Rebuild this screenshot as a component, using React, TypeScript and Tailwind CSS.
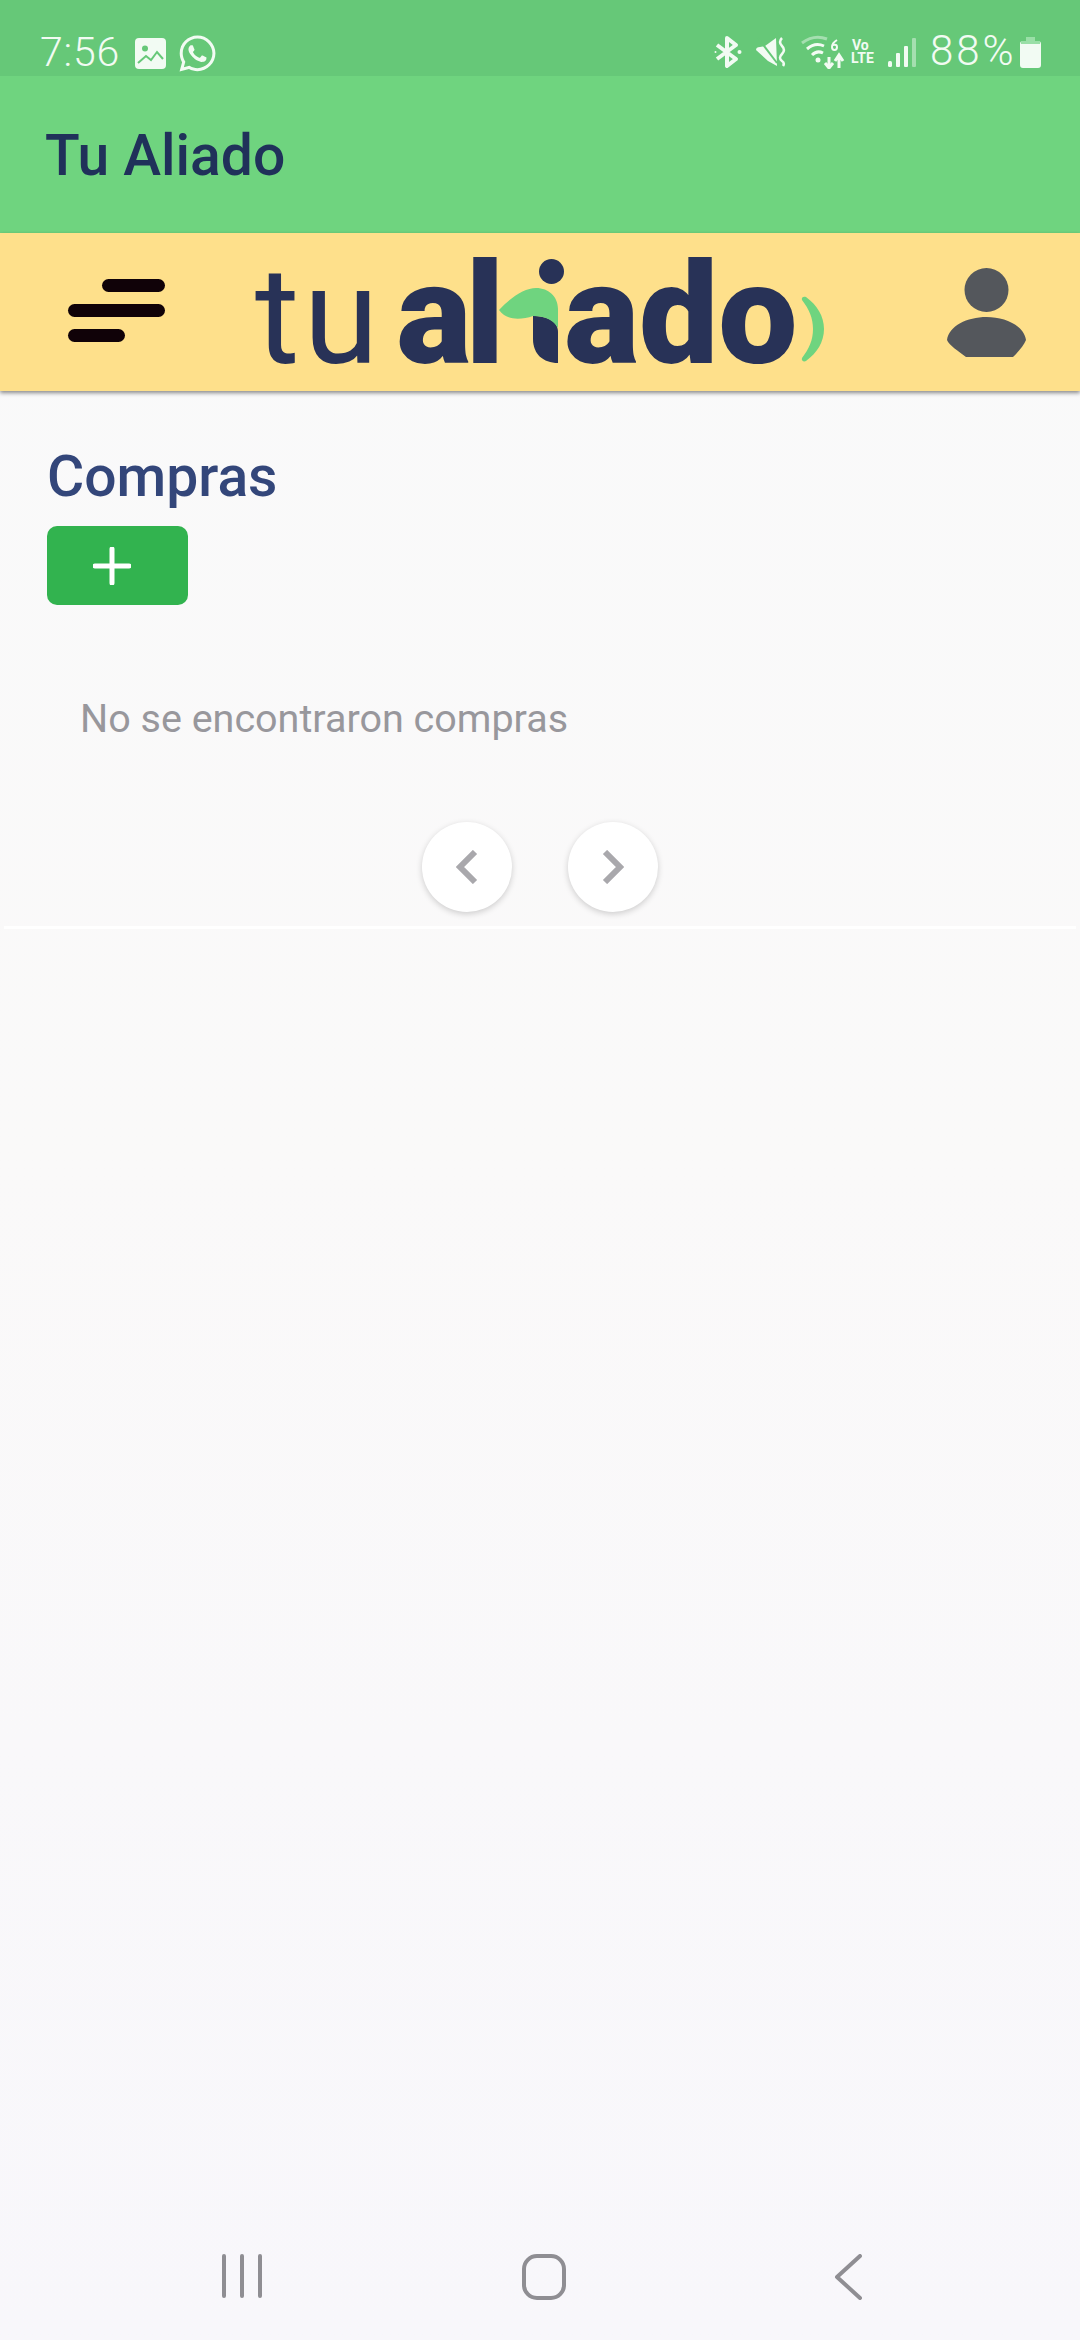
import React from "react";
import { FaWhatsapp } from "react-icons/fa";

const roboto = { fontFamily: "Roboto, sans-serif" };

function StatusLeft() {
  return (
    <div className="flex items-center">
      <span className="text-[41px] leading-none font-light text-[#f2fbf3] tracking-[0.8px] w-[95px] -mt-[2px]">7:56</span>
      <svg width="31" height="31" viewBox="0 0 31 31" className="mr-[11px]">
        <rect width="31" height="31" rx="4" fill="#f2fbf3" />
        <circle cx="10" cy="10.5" r="3" fill="#66c878" />
        <path d="M3 25 L11 18 L16 22 L22 14 L28 21" fill="none" stroke="#66c878" strokeWidth="2" />
      </svg>
      <FaWhatsapp className="w-[41px] h-[41px] text-[#f2fbf3]" />
    </div>
  );
}

function StatusRight() {
  return (
    <div className="flex items-center -mt-[1px]">
      <svg width="28" height="34" viewBox="0 0 28 34" className="mr-[14px]" fill="none" stroke="#f2fbf3" strokeWidth="4" strokeLinejoin="round">
        <path d="M3 10 L22 24 L13 31 L13 3 L22 10 L3 24" />
        <circle cx="1.5" cy="17" r="1" fill="#f2fbf3" stroke="none" />
        <circle cx="25.5" cy="17" r="2" fill="#f2fbf3" stroke="none" />
      </svg>
      <svg width="30" height="30" viewBox="0 0 30 30" className="mr-[15px]" fill="none">
        <path d="M0 13 Q0 10 4 10 L9 9 L20 1 L21 29 L12 24 Z" fill="#f2fbf3" />
        <path d="M2 1 L21 26" stroke="#66c878" strokeWidth="2" />
        <path d="M26 1 Q22 5 26 9 Q30 13 26 17 Q22 21 26 24 Q29 26 27 29" stroke="#f2fbf3" strokeWidth="2.5" />
      </svg>
      <svg width="44" height="34" viewBox="0 0 44 34" className="mr-[6px]" fill="none">
        <path d="M1 8 Q13 -1 26 4" stroke="#f2fbf3" strokeOpacity="0.45" strokeWidth="3" />
        <path d="M6 14 Q14 7 23 11" stroke="#f2fbf3" strokeWidth="3" />
        <path d="M11 20 Q16 15 22 18" stroke="#f2fbf3" strokeWidth="3" />
        <circle cx="17" cy="25" r="2.5" fill="#f2fbf3" />
        <path d="M28 22 L28 32 M24 28 L28 33 L32 28" stroke="#f2fbf3" strokeWidth="3" />
        <path d="M38 33 L38 21 M34 26 L38 20 L42 26" stroke="#f2fbf3" strokeWidth="3" />
        <path d="M36 5 Q31 8 31 12 Q31 15 33.5 15 Q36 15 36 12 Q36 9 32 10" stroke="#f2fbf3" strokeWidth="2" />
      </svg>
      <div className="flex flex-col items-start w-[26px] mr-[11px] text-[#f2fbf3] font-bold" style={roboto}>
        <span className="text-[14px] leading-[13px] pl-[1px]">Vo</span>
        <span className="text-[14px] leading-[13px] tracking-[0.2px]">LTE</span>
      </div>
      <svg width="28" height="29" viewBox="0 0 28 29" className="mr-[14px]" fill="#f2fbf3">
        <rect x="0" y="23" width="4" height="6" rx="1.5" />
        <rect x="8" y="15" width="4" height="14" rx="1" />
        <rect x="16" y="8" width="4" height="21" rx="1" />
        <rect x="24" y="0" width="4" height="29" rx="1" fillOpacity="0.45" />
      </svg>
      <span className="text-[42px] leading-none font-light text-[#f2fbf3] tracking-[3px] w-[90px] -mt-[2px]">88%</span>
      <svg width="21" height="31" viewBox="0 0 21 31">
        <path d="M6 1 L15 1 L15 4 L18 4 Q21 4 21 7 L21 28 Q21 31 18 31 L3 31 Q0 31 0 28 L0 7 Q0 4 3 4 L6 4Z" fill="#f2fbf3" />
        <path d="M6 0 L15 0 L15 4 L20 4 L20 7 L1 7 L1 4 L6 4Z" fill="#9adfa7" />
      </svg>
    </div>
  );
}

function Logo() {
  return (
    <div className="flex items-baseline leading-none text-[#283257] h-[130px] mt-[6px]" style={roboto}>
      <span className="text-[136px] font-normal tracking-[4px] mr-[14px] leading-[130px]">tu</span>
      <span className="text-[141px] font-black tracking-[-6px] leading-[130px]">al</span>
      <svg width="66" height="104" viewBox="0 0 66 104" className="ml-[1px] -mr-[1px] self-end mb-[17px]">
        <ellipse cx="52.5" cy="12.5" rx="12.5" ry="12.5" fill="#283257" />
        <path d="M34 57 C48 57 59 62 59 73 L59 104 C44 104 34 95 34 80Z" fill="#283257" />
        <path d="M0 51 C12 38 26 29 37 29 C50 29 59 38 59 50 L59 69 C55 62 48 57 34 57 C22 61 8 62 0 51Z" fill="#6fd47f" />
      </svg>
      <span className="text-[141px] font-black leading-[130px]">ado</span>
      <svg width="24" height="66" viewBox="0 0 24 66" className="ml-[3px] self-end mb-[18px]">
        <path d="M1 4 C0 1 3 0 5 1 C16 9 23 20 23 33 C23 46 16 57 5 65 C3 66 0 65 1 62 C8 53 12 44 12 33 C12 22 8 13 1 4Z" fill="#6fd47f" />
      </svg>
    </div>
  );
}

function Person() {
  return (
    <svg width="80" height="89" viewBox="0 0 80 89" fill="#54575c">
      <circle cx="39.5" cy="22" r="22" />
      <path d="M0 72 C2 58 20 49 39.5 49 C59 49 77 58 79 72 C77 77 72 83 66 89 L19 89 C11 83 2 77 0 72Z" />
    </svg>
  );
}

export default function App() {
  return (
    <div className="w-[1080px] h-[2340px] flex flex-col bg-linear-to-b from-[#f9f9fa] via-[#faf9f9] to-[#f8f7fb] overflow-hidden" style={roboto}>
      <div className="h-[76px] bg-[#66c878] flex justify-between items-start pt-[33px] pl-[40px] pr-[39px] shrink-0">
        <StatusLeft />
        <StatusRight />
      </div>
      <div className="h-[157px] bg-[#6fd47f] flex items-center pl-[45px] shrink-0">
        <span className="text-[57px] leading-none font-medium text-[#20315a] mt-[2px]">Tu Aliado</span>
      </div>
      <header className="relative z-10 h-[158px] bg-[#fee08b] shadow-[0_2px_4px_rgba(0,0,0,0.45)] flex items-center shrink-0 pl-[68px] pr-[53px]">
        <div className="flex flex-col gap-[12px] w-[97px] mr-[90px] items-end -mt-[3px]">
          <div className="w-[63px] h-[13px] rounded-full bg-[#100208]" />
          <div className="w-[97px] h-[13px] rounded-full bg-[#100208]" />
          <div className="w-[57px] h-[13px] rounded-full bg-[#100208] self-start" />
        </div>
        <Logo />
        <div className="ml-auto">
          <Person />
        </div>
      </header>
      <main className="h-[538px] mx-[4px] border-b-[3px] border-white flex flex-col pl-[43px] shrink-0">
        <h1 className="text-[57px] leading-none font-medium text-[#33467a] mt-[57px]">Compras</h1>
        <button className="mt-[21px] w-[141px] h-[79px] rounded-[10px] bg-[#32b34f] flex items-center pl-[46px]">
          <svg width="38" height="38" viewBox="0 0 38 38" stroke="#ffffff" strokeWidth="5" strokeLinecap="round">
            <path d="M19 2 L19 36 M2 19 L36 19" />
          </svg>
        </button>
        <p className="mt-[94px] ml-[33px] text-[39.5px] leading-none text-[#98979c]">No se encontraron compras</p>
        <div className="flex mt-[83px] ml-[375px] gap-[56px]">
          <button className="w-[90px] h-[90px] rounded-full bg-white shadow-[0_2px_6px_rgba(0,0,0,0.18)] flex items-center justify-center">
            <svg width="22" height="34" viewBox="0 0 22 34" fill="none" stroke="#a9a8ac" strokeWidth="6">
              <path d="M19 2 L4 17 L19 32" />
            </svg>
          </button>
          <button className="w-[90px] h-[90px] rounded-full bg-white shadow-[0_2px_6px_rgba(0,0,0,0.18)] flex items-center justify-center">
            <svg width="22" height="34" viewBox="0 0 22 34" fill="none" stroke="#a9a8ac" strokeWidth="6">
              <path d="M3 2 L18 17 L3 32" />
            </svg>
          </button>
        </div>
      </main>
      <div className="flex-1" />
      <nav className="h-[126px] flex items-start shrink-0 pt-[40px] pl-[221px]">
        <svg width="42" height="44" viewBox="0 0 42 44" stroke="#8f8e93" strokeWidth="4" strokeLinecap="round" className="mr-[258px]">
          <path d="M3 2 L3 42 M21 2 L21 42 M39 2 L39 42" />
        </svg>
        <svg width="46" height="46" viewBox="0 0 46 46" fill="none" stroke="#8f8e93" strokeWidth="4" className="mr-[267px]">
          <rect x="3" y="2" width="40" height="42" rx="13" />
        </svg>
        <svg width="28" height="46" viewBox="0 0 28 46" fill="none" stroke="#8f8e93" strokeWidth="4" strokeLinecap="round" strokeLinejoin="round">
          <path d="M26 2 L3 23 L26 44" />
        </svg>
      </nav>
    </div>
  );
}
